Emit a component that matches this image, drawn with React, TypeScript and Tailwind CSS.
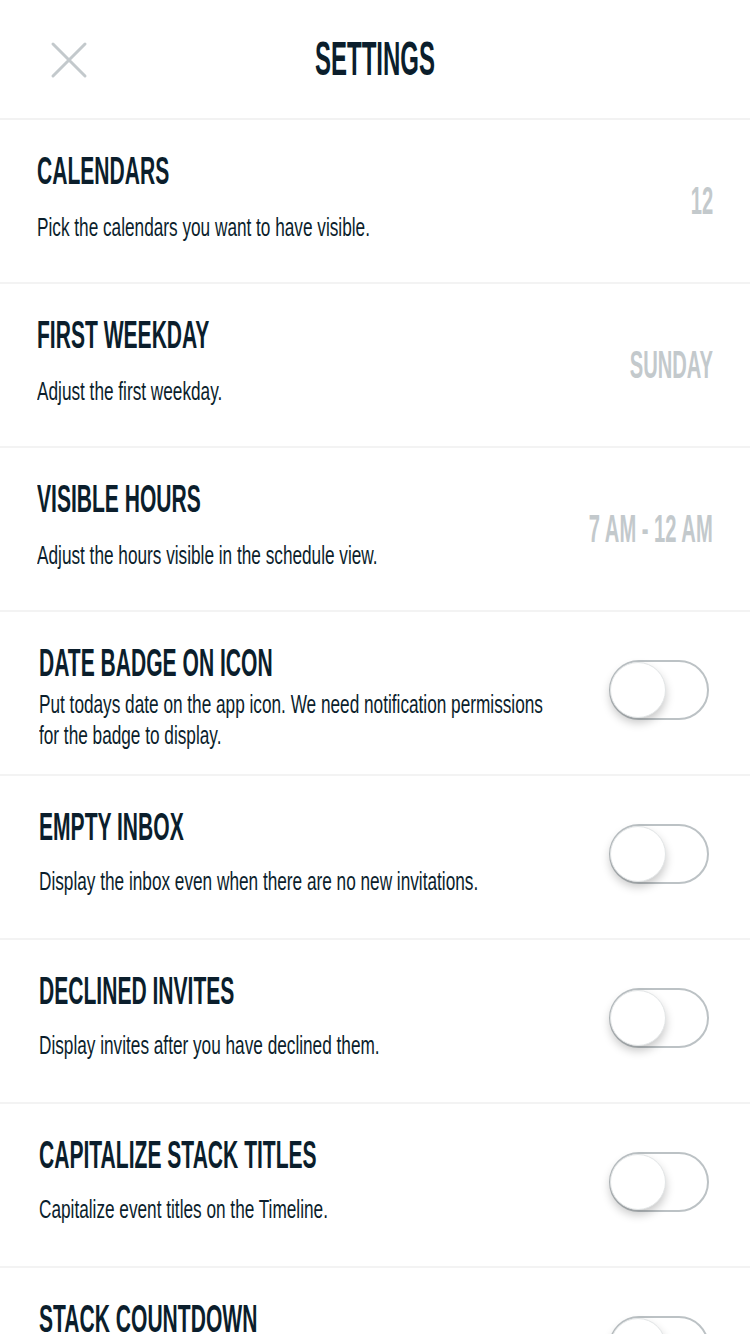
import * as React from "react";

type Row = {
  title: string;
  lines: string[];
  value?: string;
  toggle?: boolean;
  gap: string;
  pl: string;
};

const rows: Row[] = [
  { title: "CALENDARS", lines: ["Pick the calendars you want to have visible."], value: "12", gap: "mt-[22px]", pl: "pl-[37px]" },
  { title: "FIRST WEEKDAY", lines: ["Adjust the first weekday."], value: "SUNDAY", gap: "mt-[22px]", pl: "pl-[37px]" },
  { title: "VISIBLE HOURS", lines: ["Adjust the hours visible in the schedule view."], value: "7 AM - 12 AM", gap: "mt-[22px]", pl: "pl-[37px]" },
  {
    title: "DATE BADGE ON ICON",
    lines: ["Put todays date on the app icon. We need notification permissions", "for the badge to display."],
    toggle: true,
    gap: "mt-[7px]",
    pl: "pl-[39px]",
  },
  { title: "EMPTY INBOX", lines: ["Display the inbox even when there are no new invitations."], toggle: true, gap: "mt-[20px]", pl: "pl-[39px]" },
  { title: "DECLINED INVITES", lines: ["Display invites after you have declined them."], toggle: true, gap: "mt-[20px]", pl: "pl-[39px]" },
  { title: "CAPITALIZE STACK TITLES", lines: ["Capitalize event titles on the Timeline."], toggle: true, gap: "mt-[20px]", pl: "pl-[39px]" },
  { title: "STACK COUNTDOWN", lines: ["Show a countdown on the Timeline stacks."], toggle: true, gap: "mt-[20px]", pl: "pl-[39px]" },
];

function Toggle() {
  return (
    <div className="relative mb-[6px] mr-[41px] h-[60px] w-[100px] shrink-0 rounded-full border-2 border-[#bcc2c5] bg-white">
      <div className="absolute -left-[1px] top-[0px] h-[56px] w-[56px] rounded-full border border-[#e2e5e6] bg-white shadow-[0_5px_10px_rgba(0,0,0,0.22)]" />
    </div>
  );
}

function SettingRow({ row }: { row: Row }) {
  return (
    <div className={`flex h-[164px] items-center justify-between border-b-2 border-[#f3f3f3] ${row.pl}`}>
      <div className="min-w-0 flex-1 self-start pt-[31px] text-[#0b1e2c]">
        <div className="origin-left scale-x-[0.54] whitespace-nowrap text-[39px] font-bold leading-[39px]">
          {row.title}
        </div>
        <div className={`${row.gap} origin-left scale-x-[0.662] whitespace-nowrap text-[26px] leading-[31px]`}>
          {row.lines.map((l) => (
            <div key={l}>{l}</div>
          ))}
        </div>
      </div>
      {row.value && (
        <div className="mr-[37px] shrink-0 origin-right scale-x-[0.53] whitespace-nowrap text-right text-[38px] font-bold leading-[38px] text-[#c3c9cc]">
          {row.value}
        </div>
      )}
      {row.toggle && <Toggle />}
    </div>
  );
}

export default function App() {
  return (
    <div className="h-[1334px] w-[750px] overflow-hidden bg-white font-['Liberation_Sans',Arial,sans-serif]">
      <header className="relative flex h-[120px] items-center justify-center border-b-2 border-[#f2f2f2]">
        <button className="absolute left-[49px] top-[40px] h-[40px] w-[40px]">
          <svg viewBox="0 0 40 40" className="h-[40px] w-[40px]" fill="none" stroke="#c3c9cc" strokeWidth="3" strokeLinecap="round">
            <path d="M4 4 L36 36 M36 4 L4 36" />
          </svg>
        </button>
        <h1 className="scale-x-[0.5] text-[48px] font-bold leading-[48px] text-[#0b1e2c]">SETTINGS</h1>
      </header>
      {rows.map((r) => (
        <SettingRow key={r.title} row={r} />
      ))}
    </div>
  );
}
